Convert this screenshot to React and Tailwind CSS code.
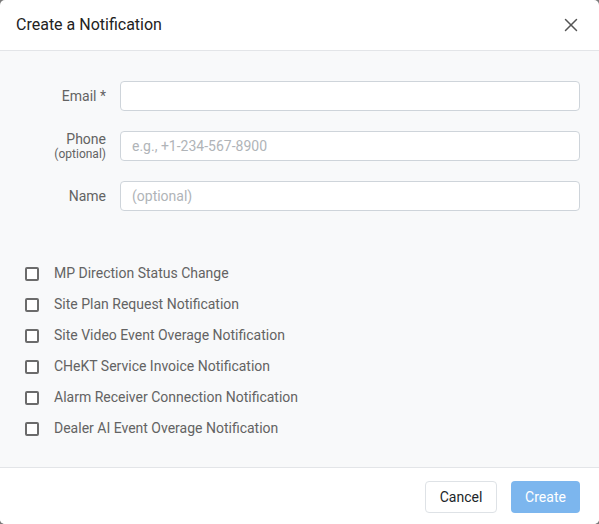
import { X } from "lucide-react";

const NOTIFICATION_TYPES = [
  "MP Direction Status Change",
  "Site Plan Request Notification",
  "Site Video Event Overage Notification",
  "CHeKT Service Invoice Notification",
  "Alarm Receiver Connection Notification",
  "Dealer AI Event Overage Notification",
];

function FieldRow({ label, sub, placeholder }) {
  return (
    <div className="flex h-[30px] items-center gap-[14px]">
      <div className="w-[86px] text-right leading-none text-[#636363]">
        <div className="text-[14px]">{label}</div>
        {sub && <div className="mt-[2px] text-[12px]">{sub}</div>}
      </div>
      <input
        className="h-[30px] flex-1 rounded-[4px] border border-[#ced4da] bg-white px-[11px] text-[14px] text-[#212529] outline-none placeholder:text-[#b0b4b8]"
        placeholder={placeholder}
      />
    </div>
  );
}

export default function App() {
  return (
    <div
      className="h-[524px] w-[599px] bg-[#7a7a7a]"
      style={{ fontFamily: "Roboto, 'Liberation Sans', sans-serif" }}
    >
      <div className="flex h-full flex-col overflow-hidden rounded-[5px] bg-white">
        {/* Header */}
        <div className="flex h-[51px] shrink-0 items-center justify-between border-b border-[#e3e5e8] pl-4 pr-[17px]">
          <h1 className="text-[16px] text-[#222]">Create a Notification</h1>
          <X className="h-[22px] w-[22px] text-[#555]" strokeWidth={1.6} />
        </div>

        {/* Body */}
        <div className="flex flex-1 flex-col bg-[#f8f9fa] pt-[30px]">
          <div className="flex flex-col gap-5 pl-5 pr-[19px]">
            <FieldRow label="Email *" />
            <FieldRow label="Phone" sub="(optional)" placeholder="e.g., +1-234-567-8900" />
            <FieldRow label="Name" placeholder="(optional)" />
          </div>

          <div className="mt-[47px] flex flex-col pl-[25px]">
            {NOTIFICATION_TYPES.map((t) => (
              <label key={t} className="flex h-[31px] items-center gap-[15px]">
                <span className="h-[14px] w-[14px] rounded-[2px] border-2 border-[#6b6b6b] bg-white" />
                <span className="text-[14px] text-[#636363]">{t}</span>
              </label>
            ))}
          </div>
        </div>

        {/* Footer */}
        <div className="flex h-[57px] shrink-0 items-start justify-end gap-[14px] border-t border-[#e3e5e8] bg-white pr-[19px] pt-[13px]">
          <button className="h-[32px] w-[72px] rounded-[4px] border border-[#dee2e6] bg-white text-[14px] text-[#212529]">
            Cancel
          </button>
          <button className="h-[32px] w-[69px] rounded-[4px] bg-[#7cb6ee] text-[14px] text-white">
            Create
          </button>
        </div>
      </div>
    </div>
  );
}
